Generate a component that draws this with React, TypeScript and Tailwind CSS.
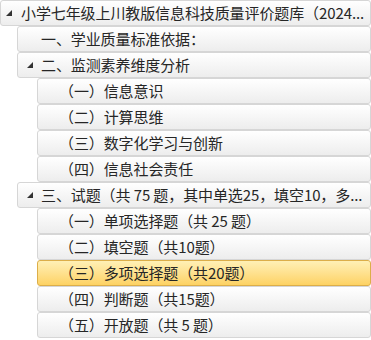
import React from 'react';

type Node = {
  label: string;
  level: 0 | 1 | 2;
  open?: boolean;
  selected?: boolean;
};

// labels are written as the tree shows them, already shortened
const nodes: Node[] = [
  { label: '小学七年级上川教版信息科技质量评价题库（2024...', level: 0, open: true },
  { label: '一、学业质量标准依据：', level: 1 },
  { label: '二、监测素养维度分析', level: 1, open: true },
  { label: '（一）信息意识', level: 2 },
  { label: '（二）计算思维', level: 2 },
  { label: '（三）数字化学习与创新', level: 2 },
  { label: '（四）信息社会责任', level: 2 },
  { label: '三、试题（共 75 题，其中单选25，填空10，多...', level: 1, open: true },
  { label: '（一）单项选择题（共 25 题）', level: 2 },
  { label: '（二）填空题（共10题）', level: 2 },
  { label: '（三）多项选择题（共20题）', level: 2, selected: true },
  { label: '（四）判断题（共15题）', level: 2 },
  { label: '（五）开放题（共 5 题）', level: 2 },
];

// box left edge and text start for each depth
const boxIndent = ['ml-0', 'ml-[17px]', 'ml-[37px]'];
const textIndent = ['pl-[20px]', 'pl-[23px]', 'pl-[21px]'];

function Caret() {
  return (
    <svg width="6" height="6" viewBox="0 0 6 6">
      <polygon points="6,0 6,6 0,6" fill="#333333" />
    </svg>
  );
}

function TreeRow({ node }: { node: Node }) {
  const tone = node.selected
    ? 'border-[#dcae49] bg-gradient-to-b from-[#fff0b5] to-[#fdd263]'
    : 'border-[#d6d6d6] bg-gradient-to-b from-white to-[#ededed]';
  const caretPos = node.level === 0 ? 'left-[5px]' : 'left-[9px]';

  return (
    <div
      className={`relative flex h-[26px] items-center rounded-[3px] border ${tone} ${boxIndent[node.level]} ${textIndent[node.level]}`}
    >
      {node.open && (
        <span className={`absolute top-[9px] ${caretPos} flex`}>
          <Caret />
        </span>
      )}
      <span className="whitespace-nowrap text-[15px] leading-[24px] tracking-[-0.1px] text-[#262626]">
        {node.label}
      </span>
    </div>
  );
}

export default function App() {
  return (
    <div
      className="h-[340px] w-[371px] overflow-hidden bg-white"
      style={{ fontFamily: '"Noto Sans CJK SC", "Noto Sans", sans-serif' }}
    >
      <div className="flex flex-col">
        {nodes.map((n, i) => (
          <TreeRow key={i} node={n} />
        ))}
      </div>
    </div>
  );
}
